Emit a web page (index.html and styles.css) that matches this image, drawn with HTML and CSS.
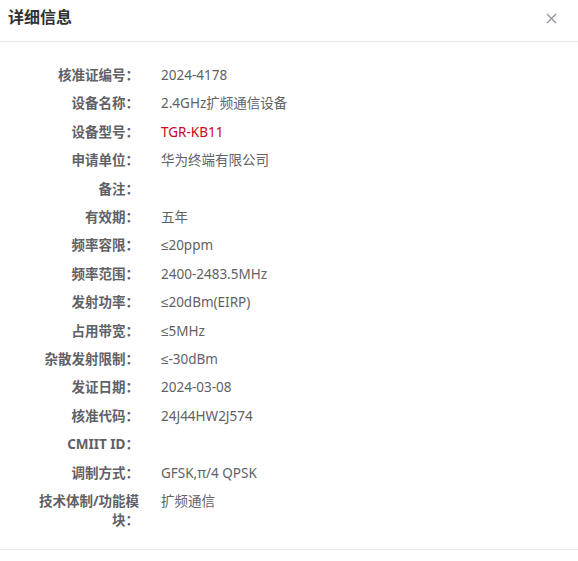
FILE: index.html
```html
<!DOCTYPE html>
<html lang="zh-CN">
<head>
    <meta charset="UTF-8">
    <meta name="viewport" content="width=device-width, initial-scale=1.0">
    <title>详细信息</title>
    <link rel="stylesheet" href="styles.css">
</head>
<body>
    <div class="dialog">
        <div class="dialog-header">
            <span class="dialog-title">详细信息</span>
            <button class="close-button" aria-label="关闭">
                <svg width="11" height="11" viewBox="0 0 11 11"><path d="M1 1 L10 10 M10 1 L1 10" stroke="#909399" stroke-width="1.3" fill="none"/></svg>
            </button>
        </div>

        <div class="detail-list">
            <div class="detail-row"><span class="label">核准证编号：</span><span class="value">2024-4178</span></div>
            <div class="detail-row"><span class="label">设备名称：</span><span class="value">2.4GHz扩频通信设备</span></div>
            <div class="detail-row"><span class="label">设备型号：</span><span class="value red">TGR-KB11</span></div>
            <div class="detail-row"><span class="label">申请单位：</span><span class="value">华为终端有限公司</span></div>
            <div class="detail-row"><span class="label">备注：</span><span class="value"></span></div>
            <div class="detail-row"><span class="label">有效期：</span><span class="value">五年</span></div>
            <div class="detail-row"><span class="label">频率容限：</span><span class="value">≤20ppm</span></div>
            <div class="detail-row"><span class="label">频率范围：</span><span class="value">2400-2483.5MHz</span></div>
            <div class="detail-row"><span class="label">发射功率：</span><span class="value">≤20dBm(EIRP)</span></div>
            <div class="detail-row"><span class="label">占用带宽：</span><span class="value">≤5MHz</span></div>
            <div class="detail-row"><span class="label">杂散发射限制：</span><span class="value">≤-30dBm</span></div>
            <div class="detail-row"><span class="label">发证日期：</span><span class="value">2024-03-08</span></div>
            <div class="detail-row"><span class="label">核准代码：</span><span class="value">24J44HW2J574</span></div>
            <div class="detail-row"><span class="label">CMIIT ID：</span><span class="value"></span></div>
            <div class="detail-row"><span class="label">调制方式：</span><span class="value">GFSK,π/4 QPSK</span></div>
            <div class="detail-row"><span class="label">技术体制/功能模块：</span><span class="value">扩频通信</span></div>
        </div>

        <div class="dialog-footer"></div>
    </div>
</body>
</html>
```

FILE: styles.css
```css
/* Base */
body {
    margin: 0;
    padding: 0;
    background-color: #fff;
    font-family: "Noto Sans", "Liberation Sans", "Noto Sans CJK SC", sans-serif;
    color: #606266;
}

.dialog {
    width: 578px;
    background-color: #fff;
}

.dialog-header {
    display: flex;
    justify-content: space-between;
    align-items: flex-start;
    height: 42px;
    box-sizing: border-box;
    padding: 7px 21px 0 8px;
    border-bottom: 1px solid #e4e7ed;
}

.dialog-title {
    font-size: 16px;
    line-height: 20px;
    font-weight: bold;
    color: #303133;
}

.close-button {
    background: none;
    border: none;
    padding: 0;
    margin-top: 6px;
    width: 11px;
    height: 11px;
    cursor: pointer;
}

.close-button svg {
    display: block;
}

.detail-list {
    padding: 19px 0 15px 29px;
}

.detail-row {
    display: flex;
    padding: 5px 0;
    font-size: 13.5px;
    line-height: 18.4px;
}

.label {
    flex: 0 0 110px;
    text-align: right;
    font-weight: bold;
    color: #5f6166;
}

.value {
    margin-left: 22px;
    color: #606266;
}

.red {
    color: #d0021b;
}

.dialog-footer {
    border-top: 1px solid #ebeef5;
    height: 20px;
}
```
